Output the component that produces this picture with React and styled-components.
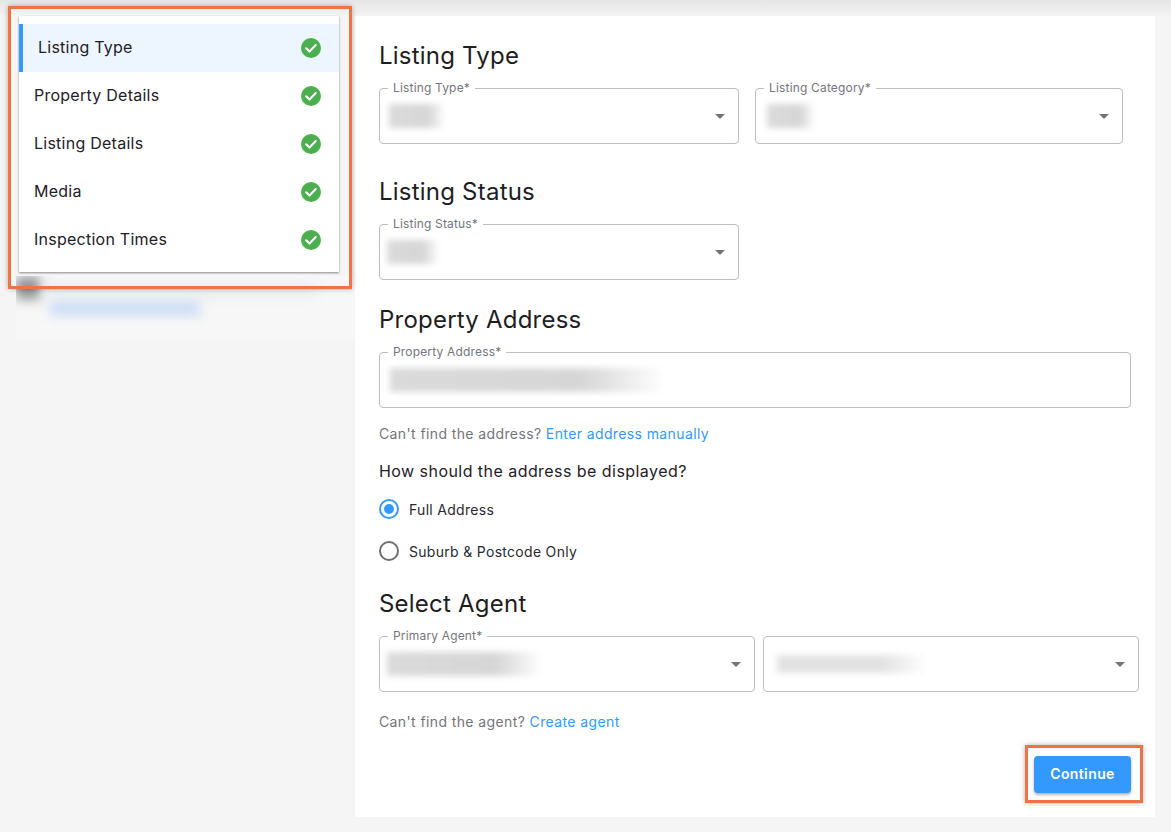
import styled, { createGlobalStyle } from "styled-components";

const GlobalStyle = createGlobalStyle`
    html, body {
        margin: 0;
        padding: 0;
        background: #f5f5f5;
    }
    body {
        font-family: Inter, "Open Sans", sans-serif;
        color: #1f2028;
    }
`;

const Page = styled.div`
    position: relative;
    width: 1171px;
    height: 832px;
    overflow: hidden;
    background: linear-gradient(#e6e6e6 0, #f0f0f0 12px, #f5f5f5 16px);
    display: flex;
    align-items: flex-start;
    padding: 16px 16px 0 19px;
    box-sizing: border-box;
    gap: 16px;
`;

const Sidebar = styled.aside`
    width: 320px;
    flex-shrink: 0;
`;

const StepCard = styled.nav`
    background: #fff;
    padding: 8px 0;
    box-shadow: 0 1px 2px rgba(0, 0, 0, 0.45);
`;

const StepRow = styled.div`
    height: 48px;
    display: flex;
    align-items: center;
    justify-content: space-between;
    box-sizing: border-box;
    padding: 0 18px 0 15px;
    background: ${(p) => (p.$active ? "#edf6ff" : "#fff")};
    border-left: ${(p) => (p.$active ? "4px solid #3399ff" : "none")};
    font-size: 16px;
    letter-spacing: 0.25px;
`;

const StepName = styled.span`
    margin-top: -2px;
`;

const BlurredNote = styled.div`
    height: 64px;
    margin: 4px 0 0 -3px;
    width: 339px;
    display: flex;
    gap: 6px;
    overflow: hidden;
    background: #f7f7f7;
`;

const NoteAvatar = styled.span`
    width: 24px;
    height: 22px;
    flex-shrink: 0;
    margin-top: 1px;
    background: #8f8f8f;
    filter: blur(6px);
`;

const NoteLines = styled.div`
    display: flex;
    flex-direction: column;
    gap: 6px;
    padding-top: 7px;
`;

const NoteLine = styled.span`
    display: block;
    height: 13px;
    width: ${(p) => p.$width}px;
    margin-left: ${(p) => p.$indent || 0}px;
    background: ${(p) => p.$color};
    filter: blur(6px);
`;

const Panel = styled.main`
    width: 800px;
    height: 801px;
    background: #fff;
    box-sizing: border-box;
    padding: 24px 16px 0 24px;
`;

const Heading = styled.h2`
    margin: ${(p) => p.$top || 0}px 0 16px;
    font-size: 24px;
    line-height: 32px;
    font-weight: 400;
    color: #1d1d24;
    letter-spacing: 0.22px;
`;

const FieldRow = styled.div`
    display: flex;
    gap: ${(p) => p.$gap}px;
`;

const FieldBox = styled.div`
    position: relative;
    width: ${(p) => p.$width}px;
    height: 56px;
    box-sizing: border-box;
    border: 1px solid #bdbdbd;
    border-radius: 4px;
    display: flex;
    align-items: center;
    justify-content: space-between;
    padding: 0 13px 0 ${(p) => p.$inset || 8}px;
`;

const FieldLabel = styled.label`
    position: absolute;
    top: -9px;
    left: 8px;
    padding: 0 5px;
    background: #fff;
    font-size: 12px;
    line-height: 15px;
    color: #75757c;
    letter-spacing: 0.17px;
`;

const BlurredValue = styled.span`
    display: block;
    width: ${(p) => p.$width}px;
    height: ${(p) => p.$height || 24}px;
    background: linear-gradient(90deg, ${(p) => p.$tone || "#dadada"} 0, ${(p) => p.$tone || "#d6d6d6"} 70%, #ffffff 100%);
    filter: blur(3px);
`;

const Caret = styled.span`
    width: 0;
    height: 0;
    border-left: 5px solid transparent;
    border-right: 5px solid transparent;
    border-top: 5px solid #757575;
`;

const Hint = styled.p`
    margin: ${(p) => p.$top || 16}px 0 0;
    font-size: 14px;
    line-height: 20px;
    color: #75757a;
    letter-spacing: 0.39px;
`;

const HintLink = styled.a`
    color: #3399ff;
`;

const Question = styled.p`
    margin: 17px 0 7px;
    font-size: 16px;
    line-height: 20px;
    letter-spacing: 0.45px;
`;

const RadioRow = styled.label`
    height: 42px;
    display: flex;
    align-items: center;
    gap: 10px;
    font-size: 14px;
    letter-spacing: 0.3px;
    color: #2a2a30;
`;

const RadioMark = styled.span`
    width: 20px;
    height: 20px;
    box-sizing: border-box;
    border-radius: 50%;
    border: 2px solid ${(p) => (p.$checked ? "#3399ff" : "#6f6f6f")};
    display: flex;
    align-items: center;
    justify-content: center;
    &::after {
        content: "";
        display: ${(p) => (p.$checked ? "block" : "none")};
        width: 10px;
        height: 10px;
        border-radius: 50%;
        background: #3399ff;
    }
`;

const ButtonRow = styled.div`
    display: flex;
    justify-content: flex-end;
    margin: 24px 8px 0 0;
`;

const ContinueButton = styled.button`
    width: 97px;
    height: 37px;
    border: 0;
    border-radius: 4px;
    padding: 0 0 2px;
    background: #3399ff;
    color: #fff;
    font-family: inherit;
    font-size: 14px;
    font-weight: 600;
    letter-spacing: 0.4px;
    box-shadow: 0 2px 3px rgba(0, 0, 0, 0.3);
`;

const Callout = styled.div`
    position: absolute;
    left: ${(p) => p.$x}px;
    top: ${(p) => p.$y}px;
    width: ${(p) => p.$w}px;
    height: ${(p) => p.$h}px;
    box-sizing: border-box;
    border: 3px solid #ee7446;
    box-shadow: 0 0 5px rgba(0, 0, 0, 0.3);
    pointer-events: none;
`;

function StepCheck() {
    return (
        <svg width="20" height="20" viewBox="0 0 20 20">
            <circle cx="10" cy="10" r="10" fill="#4caf50" />
            <path d="M5.2 10.3 L8.5 13.5 L14.8 7" fill="none" stroke="#fff" strokeWidth="2" strokeLinecap="round" strokeLinejoin="round" />
        </svg>
    );
}

function SelectField({ label, width, valueWidth, inset, tone, valueHeight }) {
    return (
        <FieldBox $width={width} $inset={inset}>
            {label && <FieldLabel>{label}</FieldLabel>}
            <BlurredValue $width={valueWidth} $tone={tone} $height={valueHeight} />
            <Caret />
        </FieldBox>
    );
}

const steps = ["Listing Type", "Property Details", "Listing Details", "Media", "Inspection Times"];

export default function App() {
    return (
        <>
            <GlobalStyle />
            <Page>
                <Sidebar>
                    <StepCard>
                        {steps.map((step, i) => (
                            <StepRow key={step} $active={i === 0}>
                                <StepName>{step}</StepName>
                                <StepCheck />
                            </StepRow>
                        ))}
                    </StepCard>
                    <BlurredNote>
                        <NoteAvatar />
                        <NoteLines>
                            <NoteLine $width={270} $color="#ebebeb" />
                            <NoteLine $width={150} $indent={4} $color="#c6d9f5" />
                        </NoteLines>
                    </BlurredNote>
                </Sidebar>
                <Panel>
                    <Heading>Listing Type</Heading>
                    <FieldRow $gap={16}>
                        <SelectField label="Listing Type*" width={360} valueWidth={56} inset={9} />
                        <SelectField label="Listing Category*" width={368} valueWidth={48} inset={11} />
                    </FieldRow>

                    <Heading $top={32}>Listing Status</Heading>
                    <SelectField label="Listing Status*" width={360} valueWidth={52} inset={7} />

                    <Heading $top={24}>Property Address</Heading>
                    <FieldBox $width={752} $inset={10}>
                        <FieldLabel>Property Address*</FieldLabel>
                        <BlurredValue $width={275} />
                    </FieldBox>
                    <Hint>
                        Can't find the address? <HintLink>Enter address manually</HintLink>
                    </Hint>

                    <Question>How should the address be displayed?</Question>
                    <RadioRow>
                        <RadioMark $checked />
                        Full Address
                    </RadioRow>
                    <RadioRow>
                        <RadioMark />
                        Suburb &amp; Postcode Only
                    </RadioRow>

                    <Heading $top={16}>Select Agent</Heading>
                    <FieldRow $gap={8}>
                        <SelectField label="Primary Agent*" width={376} valueWidth={155} inset={7} />
                        <SelectField width={376} valueWidth={150} inset={13} tone="#e2e2e2" valueHeight={18} />
                    </FieldRow>
                    <Hint $top={20}>
                        Can't find the agent? <HintLink>Create agent</HintLink>
                    </Hint>

                    <ButtonRow>
                        <ContinueButton>Continue</ContinueButton>
                    </ButtonRow>
                </Panel>
                <Callout $x={8} $y={6} $w={344} $h={283} />
                <Callout $x={1025} $y={745} $w={118} $h={58} />
            </Page>
        </>
    );
}
